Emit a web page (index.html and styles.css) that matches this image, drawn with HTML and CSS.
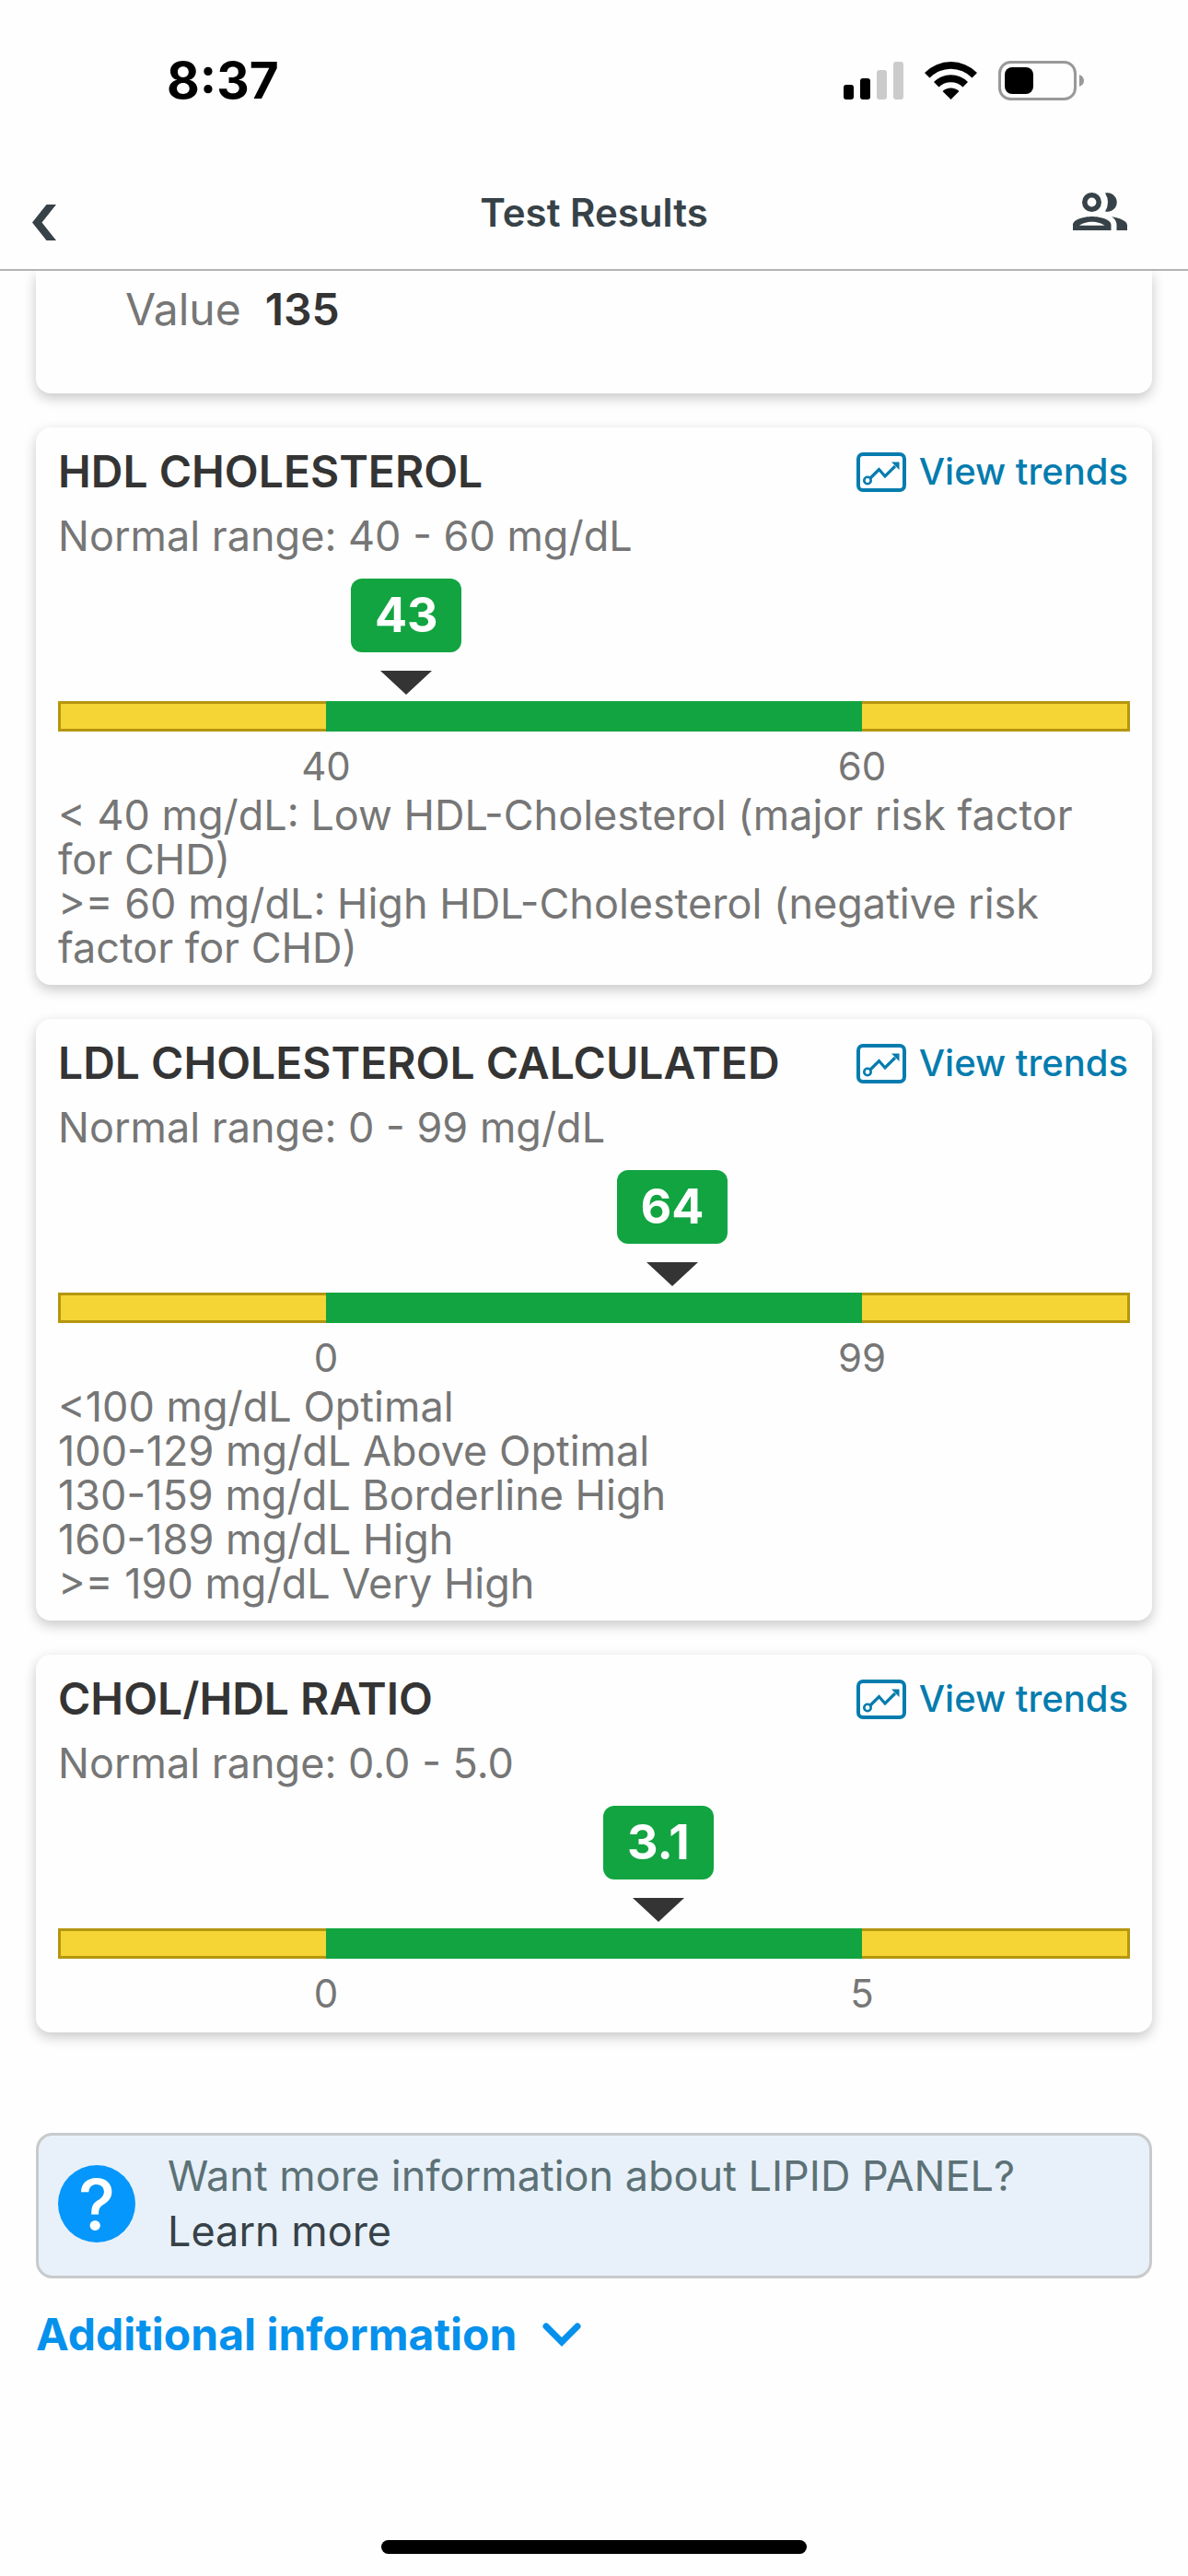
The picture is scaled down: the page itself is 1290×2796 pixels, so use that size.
FILE: index.html
```
<!DOCTYPE html>
<html lang="en">
<head>
  <meta charset="UTF-8" />
  <meta name="viewport" content="width=device-width, initial-scale=1.0" />
  <title>Test Results</title>
  <link rel="stylesheet" href="styles.css">
</head>
<body>

<!-- Shared icon -->
<svg class="icon-defs" aria-hidden="true">
  <symbol id="trendIcon" viewBox="0 0 54 43">
    <rect x="2" y="2" width="50" height="39" rx="5" fill="none" stroke="currentColor" stroke-width="4" />
    <circle cx="12" cy="30.5" r="3.7" fill="none" stroke="currentColor" stroke-width="2.6" />
    <path d="M15 28 L24.5 18.5 L31 26 L42 15" fill="none" stroke="currentColor" stroke-width="3.2" />
    <path d="M38 10.5 H46.5 V19 Z" fill="currentColor" />
  </symbol>
</svg>

<div class="app-container">
  <!-- Status Bar -->
  <div class="status-bar">
    <span class="status-time">8:37</span>
    <div class="status-icons">
      <svg width="65" height="43" viewBox="0 0 65 43">
        <rect x="0" y="26" width="11" height="16" rx="3" />
        <rect x="18" y="19" width="11" height="23" rx="3" />
        <rect x="36" y="10" width="11" height="32" rx="3" fill="#cbcbcb" />
        <rect x="54" y="1" width="11" height="41" rx="3" fill="#cbcbcb" />
      </svg>
      <svg width="57" height="43" viewBox="0 0 57 43">
        <path d="M0 13 A40 40 0 0 1 57 13 L51.5 18.5 A32 32 0 0 0 5.5 18.5 Z" />
        <path d="M10 23 A26 26 0 0 1 47 23 L41.5 28.5 A18.5 18.5 0 0 0 15.5 28.5 Z" />
        <path d="M19.5 33 A13 13 0 0 1 37.5 33 L28.5 42 Z" />
      </svg>
      <svg width="93" height="43" viewBox="0 0 93 43">
        <rect x="1.5" y="1.5" width="82" height="40" rx="12" fill="none" stroke="#999" stroke-width="3" />
        <rect x="7" y="7" width="31" height="29" rx="8" />
        <path d="M88 15 Q93 17 93 21.5 Q93 26 88 28 Z" fill="#999" />
      </svg>
    </div>
  </div>

  <!-- Header -->
  <header class="header">
    <button class="icon-btn" aria-label="Back">
      <svg class="back-icon" width="26" height="39" viewBox="0 0 26 39">
        <path d="M15.5 0 H26 L10.5 19.5 L26 39 H15.5 L0 19.5 Z" />
      </svg>
    </button>
    <h1>Test Results</h1>
    <button class="icon-btn" aria-label="Switch profile">
      <svg width="60" height="42" viewBox="0 0 60 42">
        <circle cx="20.5" cy="10.5" r="7.7" fill="none" stroke="currentColor" stroke-width="5.6" />
        <path d="M35 0.5 A10.3 10.3 0 1 1 35 20.5 Q41 10.5 35 0.5 Z" />
        <path fill-rule="evenodd" d="M0 41 V35 C0 29 13 26 20.7 26 C28.5 26 41.5 29 41.5 35 V41 Z M7 35.7 H34.5 C32 33.5 26 31.7 20.7 31.7 C15.5 31.7 9.5 33.5 7 35.7 Z" />
        <path d="M42 26.3 C50 27.5 59 30.5 59 35.5 V41 H47.5 V35 C47.5 31 45 28 42 26.3 Z" />
      </svg>
    </button>
  </header>

  <main class="results">
    <section class="card value-card">
      <span>Value</span>
      <span class="value-number">135</span>
    </section>

    <section class="card">
      <div class="card-head">
        <h2>HDL CHOLESTEROL</h2>
        <button class="trends-btn"><svg width="54" height="43"><use href="#trendIcon" /></svg>View trends</button>
      </div>
      <p class="normal-range">Normal range: 40 - 60 mg/dL</p>
      <div class="scale">
        <div class="marker" style="left: 32.5%"><span class="badge">43</span></div>
        <div class="bar"><span class="out"></span><span class="in"></span><span class="out"></span></div>
      </div>
      <div class="limits"><span>40</span><span>60</span></div>
      <p class="notes">&lt; 40 mg/dL: Low HDL-Cholesterol (major risk factor for CHD)<br>&gt;= 60 mg/dL: High HDL-Cholesterol (negative risk factor for CHD)</p>
    </section>

    <section class="card">
      <div class="card-head">
        <h2>LDL CHOLESTEROL CALCULATED</h2>
        <button class="trends-btn"><svg width="54" height="43"><use href="#trendIcon" /></svg>View trends</button>
      </div>
      <p class="normal-range">Normal range: 0 - 99 mg/dL</p>
      <div class="scale">
        <div class="marker" style="left: 57.3%"><span class="badge">64</span></div>
        <div class="bar"><span class="out"></span><span class="in"></span><span class="out"></span></div>
      </div>
      <div class="limits"><span>0</span><span>99</span></div>
      <p class="notes">&lt;100 mg/dL Optimal<br>100-129 mg/dL Above Optimal<br>130-159 mg/dL Borderline High<br>160-189 mg/dL High<br>&gt;= 190 mg/dL Very High</p>
    </section>

    <section class="card">
      <div class="card-head">
        <h2>CHOL/HDL RATIO</h2>
        <button class="trends-btn"><svg width="54" height="43"><use href="#trendIcon" /></svg>View trends</button>
      </div>
      <p class="normal-range">Normal range: 0.0 - 5.0</p>
      <div class="scale">
        <div class="marker" style="left: 56%"><span class="badge">3.1</span></div>
        <div class="bar"><span class="out"></span><span class="in"></span><span class="out"></span></div>
      </div>
      <div class="limits"><span>0</span><span>5</span></div>
    </section>

    <!-- More Information -->
    <div class="info-box">
      <span class="info-icon">?</span>
      <div class="info-text">
        <p>Want more information about LIPID PANEL?</p>
        <a href="#">Learn more</a>
      </div>
    </div>

    <button class="additional-btn">
      Additional information
      <svg width="42" height="26" viewBox="0 0 42 26">
        <path d="M4 4 L21 21 L38 4" fill="none" stroke="currentColor" stroke-width="7" stroke-linecap="round" />
      </svg>
    </button>
  </main>

  <div class="home-indicator"></div>
</div>

</body>
</html>
```
FILE: styles.css
```
* {
  box-sizing: border-box;
}

body {
  font-family: Inter, "Liberation Sans", sans-serif;
  background-color: #fefefe;
  color: #767676;
  margin: 0;
}

h1, h2, p {
  margin: 0;
}

button {
  font: inherit;
  color: inherit;
  background: none;
  border: none;
  padding: 0;
  cursor: pointer;
}

svg {
  display: block;
  flex-shrink: 0;
  fill: currentColor;
}

.icon-defs {
  position: absolute;
  width: 0;
  height: 0;
}

.app-container {
  min-height: 100vh;
  display: flex;
  flex-direction: column;
}

.status-bar {
  display: flex;
  justify-content: space-between;
  align-items: center;
  height: 174px;
  padding: 0 113px 0 181px;
  color: #000;
}

.status-time {
  font-size: 55px;
  font-weight: 700;
}

.status-icons {
  display: flex;
  gap: 23px;
}

.header {
  display: grid;
  grid-template-columns: 1fr auto 1fr;
  align-items: center;
  height: 120px;
  padding: 0 65px 6px 35px;
  border-bottom: 2px solid #b4b4b4;
  color: #374248;
}

.header h1 {
  padding-left: 30px;
  font-size: 42px;
  font-weight: 600;
}

.icon-btn {
  justify-self: start;
}

.icon-btn:last-child {
  justify-self: end;
}

.back-icon {
  margin-top: 22px;
}

.results {
  display: flex;
  flex-direction: column;
  gap: 37px;
  padding: 0 39px;
}

.card {
  padding: 24px 24px 16px;
  border-radius: 16px;
  background-color: #fefefe;
  box-shadow: 0 5px 14px rgba(0, 0, 0, 0.22);
}

.value-card {
  display: flex;
  gap: 26px;
  padding: 12px 97px 61px;
  border-radius: 0 0 16px 16px;
  font-size: 48px;
  line-height: 60px;
  clip-path: inset(0 -30px -30px -30px);
}

.value-number {
  color: #343434;
  font-weight: 600;
}

.card-head {
  display: flex;
  justify-content: space-between;
  align-items: center;
  height: 48px;
}

.card-head h2 {
  color: #343434;
  font-size: 48px;
  font-weight: 600;
  line-height: 48px;
}

.trends-btn {
  display: flex;
  align-items: center;
  gap: 14px;
  padding-right: 2px;
  color: #057cae;
  font-size: 40px;
  font-weight: 500;
  line-height: 48px;
}

.normal-range {
  margin-top: 22px;
  font-size: 45px;
  line-height: 48px;
}

.scale {
  position: relative;
  margin-top: 22px;
  padding-top: 133px;
}

.marker {
  position: absolute;
  top: 0;
  display: flex;
  flex-direction: column;
  align-items: center;
  gap: 20px;
  transform: translateX(-50%);
}

.marker::after {
  content: "";
  border: 28px solid transparent;
  border-top: 26px solid #343434;
  border-bottom: none;
}

.badge {
  width: 120px;
  border-radius: 12px;
  background-color: #12a441;
  color: #fff;
  font-size: 52px;
  font-weight: 700;
  line-height: 80px;
  text-align: center;
}

.bar {
  display: grid;
  grid-template-columns: 1fr 2fr 1fr;
  height: 33px;
}

.out {
  background-color: #f4d535;
  border: 3px solid #b5960f;
  border-right: none;
}

.out:last-child {
  border-right: 3px solid #b5960f;
  border-left: none;
}

.in {
  background-color: #12a441;
}

.limits {
  display: grid;
  grid-template-columns: 1fr 1fr;
  margin-top: 14px;
  padding-bottom: 2px;
  font-size: 42px;
  line-height: 48px;
  text-align: center;
}

.notes {
  margin-top: 3px;
  font-size: 45px;
  line-height: 48px;
}

.info-box {
  display: flex;
  align-items: center;
  gap: 35px;
  margin-top: 72px;
  padding: 14px 21px 18px;
  border: 3px solid #c8cacb;
  border-radius: 18px;
  background-color: #e8f1f9;
}

.info-icon {
  width: 84px;
  height: 84px;
  border-radius: 50%;
  background-color: #0597fb;
  color: #fff;
  font-size: 76px;
  font-weight: 500;
  line-height: 84px;
  text-align: center;
}

.info-text {
  color: #5c7176;
  font-size: 45px;
  line-height: 60px;
}

.info-text a {
  color: #374148;
  text-decoration: none;
}

.additional-btn {
  display: flex;
  align-items: center;
  align-self: flex-start;
  gap: 28px;
  color: #0591ec;
  font-size: 48px;
  font-weight: 700;
  line-height: 48px;
}

.home-indicator {
  width: 462px;
  height: 15px;
  margin: auto auto 24px;
  border-radius: 8px;
  background-color: #000;
}
```
